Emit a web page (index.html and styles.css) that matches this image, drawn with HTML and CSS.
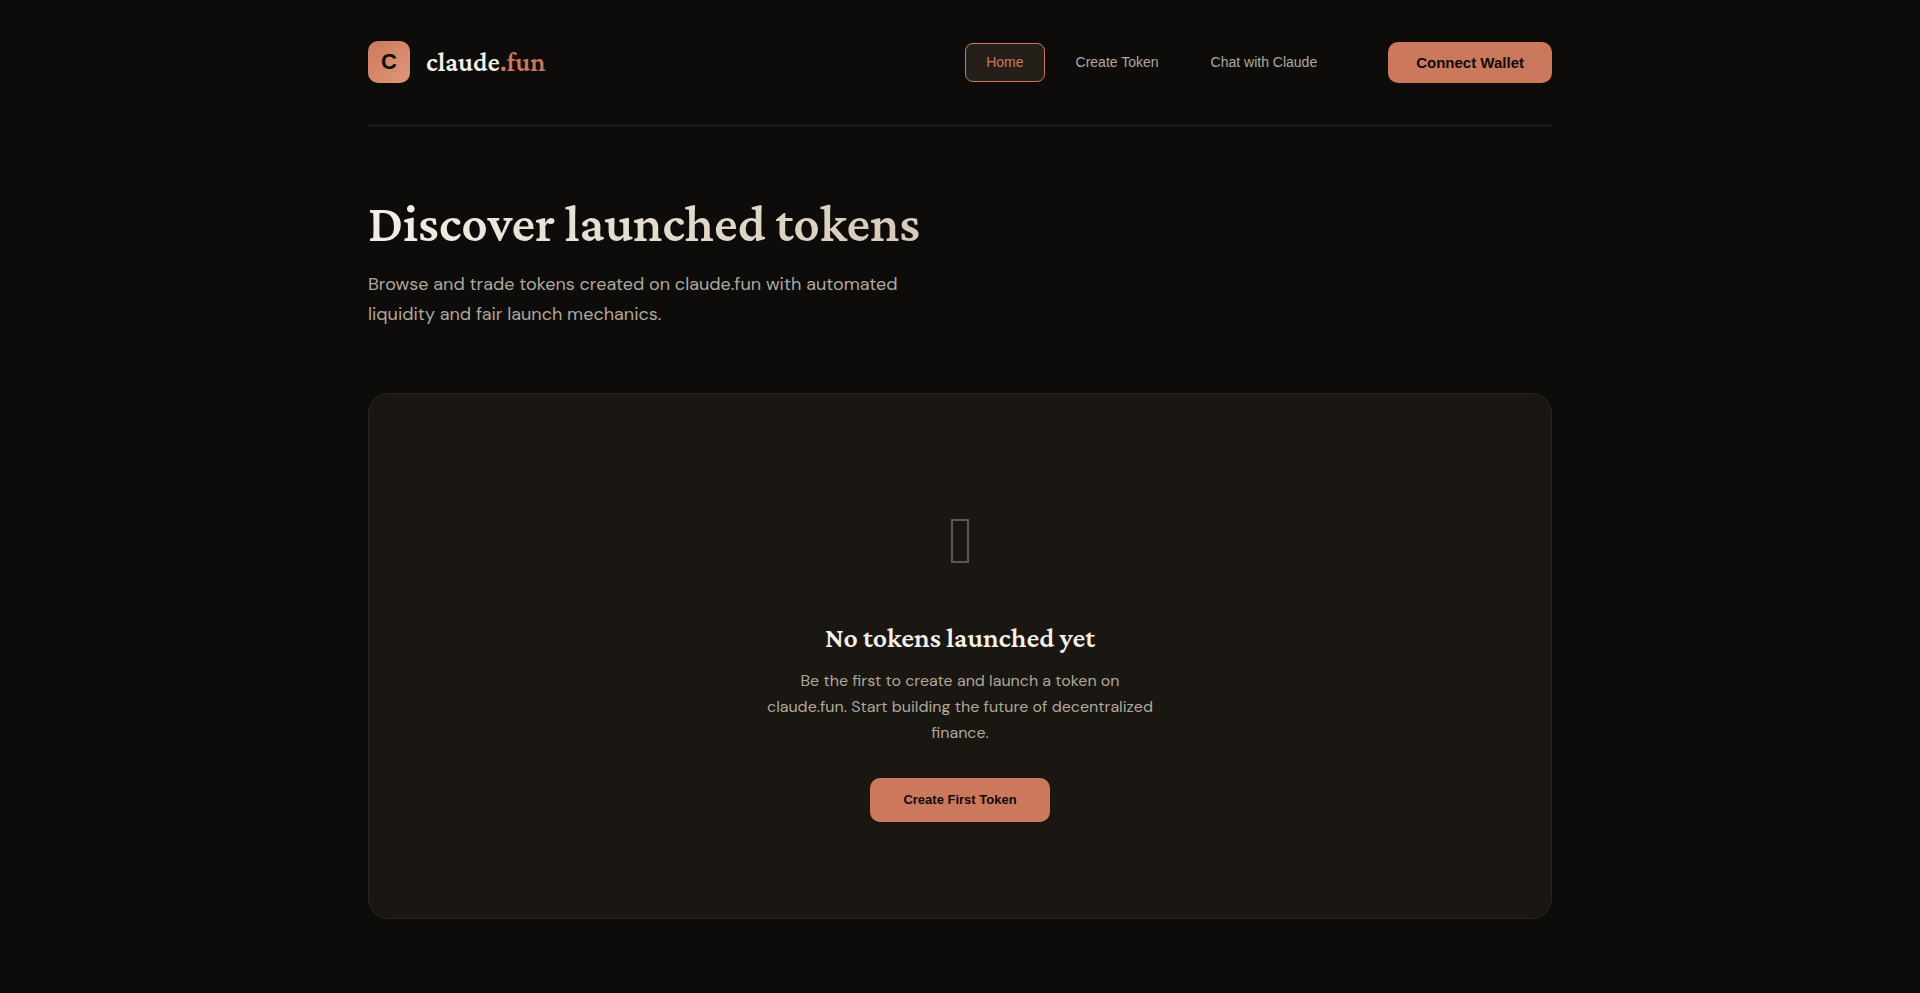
FILE: index.html
```html
<!DOCTYPE html>
<html lang="en">
<head>
<meta charset="utf-8">
<meta name="viewport" content="width=device-width, initial-scale=1">
<title>claude.fun</title>
<link rel="stylesheet" href="styles.css">
</head>
<body>
<div class="container">
  <header class="header">
    <a class="logo" href="#">
      <span class="logo-mark">C</span>
      <span class="logo-text">claude<span class="logo-accent">.fun</span></span>
    </a>
    <div class="header-right">
      <nav class="nav">
        <button class="nav-item nav-item-active" type="button">Home</button>
        <button class="nav-item" type="button">Create Token</button>
        <button class="nav-item" type="button">Chat with Claude</button>
      </nav>
      <button class="btn btn-wallet" type="button">Connect Wallet</button>
    </div>
  </header>
  <main>
    <section class="hero">
      <h1 class="hero-title">Discover launched tokens</h1>
      <p class="hero-text">Browse and trade tokens created on claude.fun with automated liquidity and fair launch mechanics.</p>
    </section>
    <section class="empty">
      <svg class="empty-icon" viewBox="0 0 18 44" width="18" height="44" aria-hidden="true"><rect x="1" y="1" width="16" height="42"/></svg>
      <h2 class="empty-title">No tokens launched yet</h2>
      <p class="empty-text">Be the first to create and launch a token on claude.fun. Start building the future of decentralized finance.</p>
      <button class="btn btn-create" type="button">Create First Token</button>
    </section>
  </main>
</div>
</body>
</html>
```
FILE: styles.css
```css
* { box-sizing: border-box; margin: 0; }

:root {
  --bg: #0d0c0a;
  --surface: #1a1612;
  --line: #2a2722;
  --text: #f5f0e8;
  --muted: #b0a89c;
  --accent: #cc785c;
  --serif: "Crimson Pro", "Liberation Serif", serif;
  --body: "DM Sans", "Open Sans", sans-serif;
  --ui: "Liberation Sans", Arial, sans-serif;
}

body {
  min-height: 100vh;
  background: var(--bg);
  color: var(--text);
  font-family: var(--body);
}

.container { max-width: 1280px; margin: 0 auto; padding: 0 48px; }

.header {
  display: flex;
  align-items: center;
  justify-content: space-between;
  padding: 41px 0 42px;
  border-bottom: 1px solid var(--line);
}

.logo { display: flex; align-items: center; gap: 16px; color: inherit; text-decoration: none; }

.logo-mark {
  display: grid;
  place-items: center;
  width: 42px;
  height: 42px;
  border-radius: 10px;
  background: linear-gradient(135deg, #cc785c, #e09878);
  color: var(--bg);
  font: bold 22px/1 var(--ui);
}

.logo-text { font: 600 27px/36px var(--serif); }
.logo-accent { color: var(--accent); }

.header-right { display: flex; align-items: center; gap: 50px; }
.nav { display: flex; gap: 10px; }

.nav-item {
  padding: 0 20px;
  border: 1px solid transparent;
  border-radius: 8px;
  background: none;
  color: var(--muted);
  font: 14px/37px var(--ui);
}

.nav-item-active { border-color: var(--accent); background: #242019; color: var(--accent); }

.btn {
  border: 0;
  border-radius: 10px;
  background: var(--accent);
  color: var(--bg);
  font-family: var(--ui);
  font-weight: bold;
}

.btn-wallet { padding: 0 28px; font-size: 15px; line-height: 41px; }
.btn-create { padding: 0 33px; font-size: 13px; line-height: 44px; }

.hero { padding: 65px 0 64px; }

.hero-title {
  width: fit-content;
  background: linear-gradient(135deg, #f5f0e8, #d4c8b8);
  background-clip: text;
  color: transparent;
  font: 600 52px/64px var(--serif);
}

.hero-text { max-width: 600px; margin-top: 14px; color: var(--muted); font-size: 18px; line-height: 30px; }

.empty {
  display: flex;
  flex-direction: column;
  align-items: center;
  padding: 125px 48px 96px;
  border: 1px solid var(--line);
  border-radius: 20px;
  background: var(--surface);
  text-align: center;
}

.empty-icon { fill: none; stroke: #5c5751; stroke-width: 2; }
.empty-title { margin-top: 57px; font: 600 28px/36px var(--serif); }
.empty-text { max-width: 400px; margin: 12px 0 32px; color: var(--muted); font-size: 16px; line-height: 26px; }
```
